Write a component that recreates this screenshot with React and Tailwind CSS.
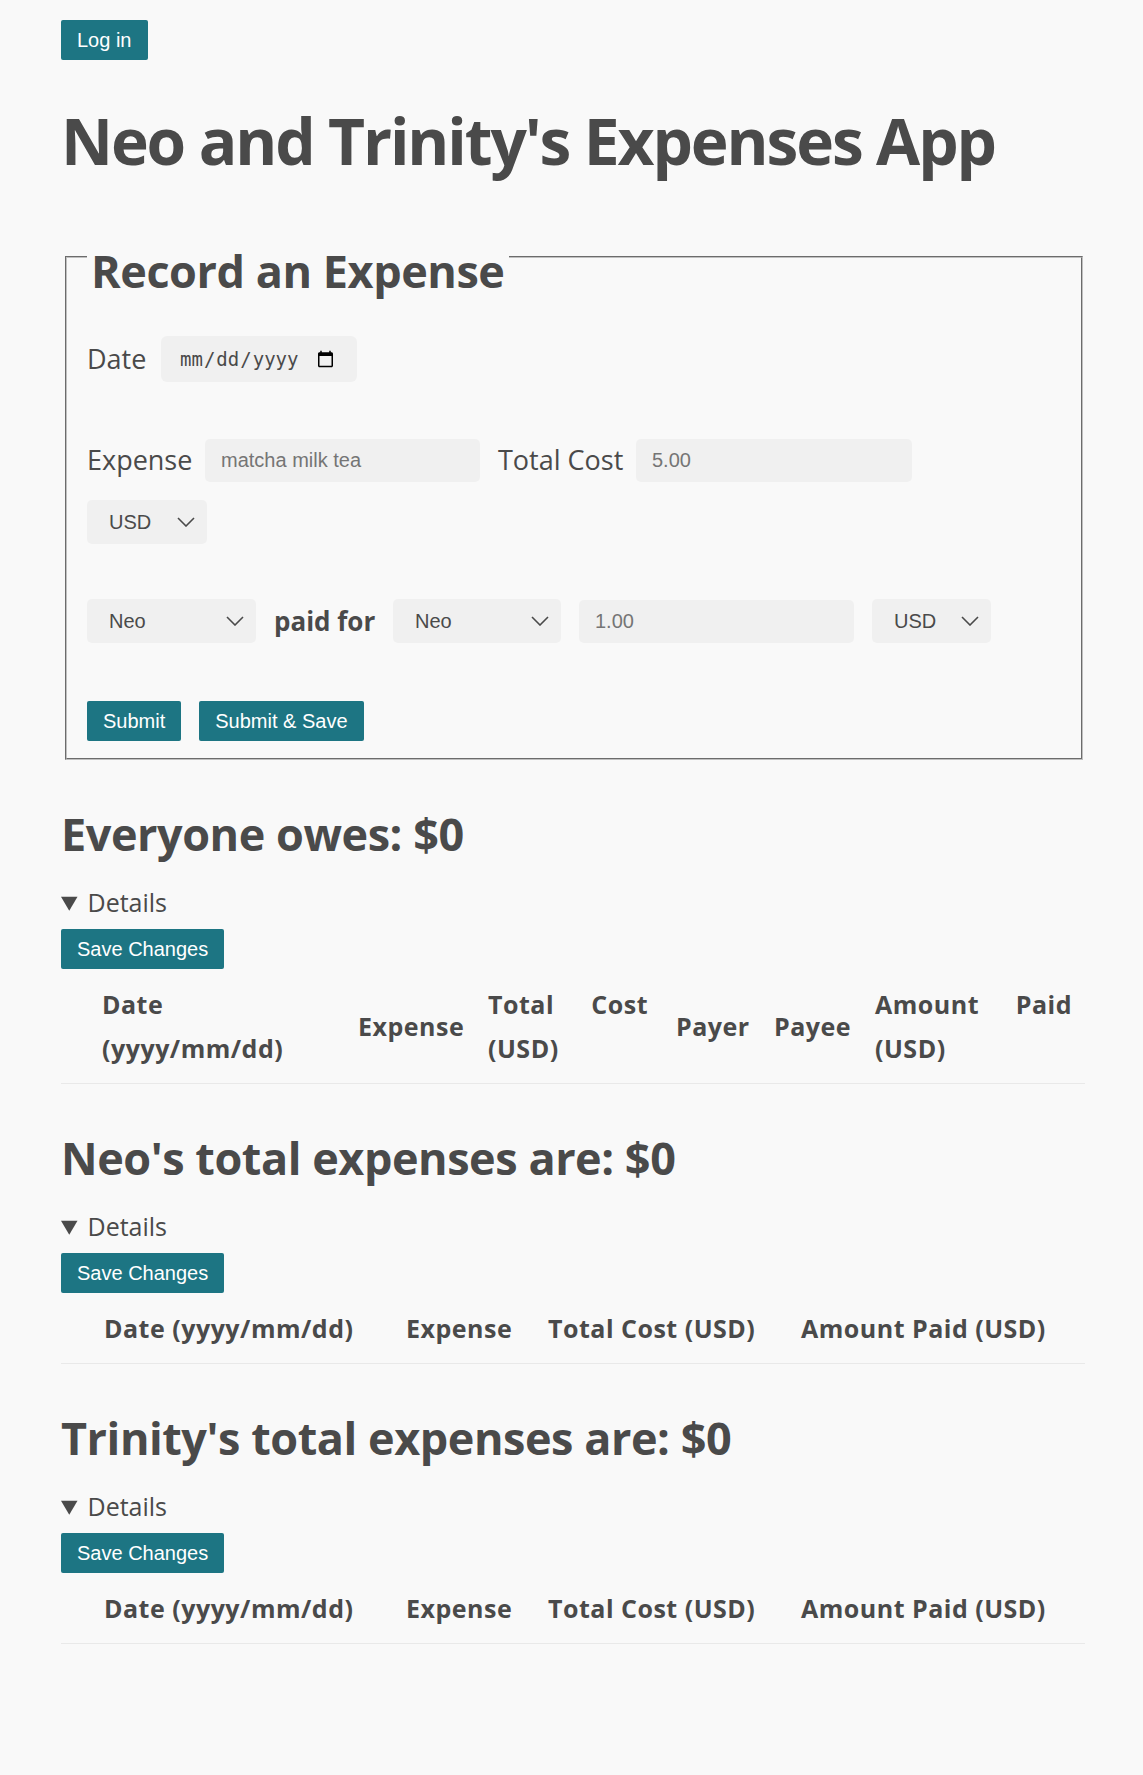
import React from "react";

const sans = "font-['Open_Sans','Noto_Sans',sans-serif]";
const arial = "font-['Liberation_Sans',Arial,sans-serif]";

function Button({ children }) {
  return (
    <button
      type="button"
      className={`h-[40px] rounded-[2px] bg-[#1d7583] px-[16px] text-[20px] leading-none text-white ${arial}`}
    >
      {children}
    </button>
  );
}

function Chevron() {
  return (
    <svg width="18" height="10" viewBox="0 0 18 10" className="pointer-events-none absolute right-[12px] top-1/2 -translate-y-1/2">
      <path d="M1 1l8 8 8-8" fill="none" stroke="#4a4a4a" strokeWidth="1.6" />
    </svg>
  );
}

function Select({ value, options, width }) {
  return (
    <div className={`relative ${width}`}>
      <select
        defaultValue={value}
        className={`h-[44px] w-full appearance-none rounded-[5px] bg-[#f0f0f0] pl-[22px] pr-[36px] text-[20px] text-[#4a4a4a] outline-none ${arial}`}
      >
        {options.map((option) => (
          <option key={option}>{option}</option>
        ))}
      </select>
      <Chevron />
    </div>
  );
}

function TextInput({ placeholder, width }) {
  return (
    <input
      type="text"
      placeholder={placeholder}
      className={`h-[43px] ${width} rounded-[5px] bg-[#f0f0f0] px-[16px] text-[20px] text-[#4a4a4a] outline-none placeholder:text-[#757575] ${arial}`}
    />
  );
}

function Section({ title, children }) {
  return (
    <section className="mt-[51px]">
      <h2 className="text-[45px] font-bold leading-none tracking-[-0.01em]">{title}</h2>
      <details open className="mt-[34px]">
        <summary className="cursor-pointer text-[25px] leading-none">Details</summary>
        <div className="mt-[14px]">
          <Button>Save Changes</Button>
        </div>
        {children}
      </details>
    </section>
  );
}

function Stacked({ first, second, width }) {
  return (
    <div className={width}>
      <div className="flex justify-between">
        <span>{first}</span>
        {second ? <span>{second}</span> : null}
      </div>
      <div>(USD)</div>
    </div>
  );
}

function EveryoneTable() {
  return (
    <table className="w-full table-fixed border-collapse text-[25px] font-bold leading-[44px] tracking-[0.02em]">
      <colgroup>
        <col className="w-[41px]" />
        <col className="w-[256px]" />
        <col className="w-[130px]" />
        <col className="w-[188px]" />
        <col className="w-[98px]" />
        <col className="w-[101px]" />
        <col className="w-[210px]" />
      </colgroup>
      <thead>
        <tr className="border-b border-[#e9e9e9] text-left align-middle">
          <th className="py-[13px]" />
          <th className="py-[13px]">
            <div>Date</div>
            <div>(yyyy/mm/dd)</div>
          </th>
          <th className="py-[13px]">Expense</th>
          <th className="py-[13px]">
            <Stacked first="Total" second="Cost" width="w-[160px]" />
          </th>
          <th className="py-[13px]">Payer</th>
          <th className="py-[13px]">Payee</th>
          <th className="py-[13px]">
            <Stacked first="Amount" second="Paid" width="w-[197px]" />
          </th>
        </tr>
      </thead>
      <tbody />
    </table>
  );
}

function PersonTable() {
  return (
    <table className="w-full table-fixed border-collapse text-[25px] font-bold leading-[44px] tracking-[0.02em]">
      <colgroup>
        <col className="w-[43px]" />
        <col className="w-[302px]" />
        <col className="w-[142px]" />
        <col className="w-[253px]" />
        <col className="w-[284px]" />
      </colgroup>
      <thead>
        <tr className="border-b border-[#e9e9e9] text-left align-middle">
          <th className="py-[13px]" />
          <th className="whitespace-nowrap py-[13px]">Date (yyyy/mm/dd)</th>
          <th className="py-[13px]">Expense</th>
          <th className="whitespace-nowrap py-[13px]">Total Cost (USD)</th>
          <th className="whitespace-nowrap py-[13px]">Amount Paid (USD)</th>
        </tr>
      </thead>
      <tbody />
    </table>
  );
}

export default function App() {
  return (
    <div className={`min-h-screen bg-[#f9f9f9] pb-[130px] pl-[61px] pr-[58px] pt-[20px] text-[#4a4a4a] ${sans}`}>
      <Button>Log in</Button>

      <h1 className="mt-[49px] text-[64px] font-bold leading-none tracking-[-0.033em]">
        Neo and Trinity's Expenses App
      </h1>

      <fieldset className="ml-[4px] mr-[2px] mt-[48px] border-2 border-[#c0c0c0] px-[20px] pb-[17px] [--tw-border-style:groove]">
        <legend className="px-[4px] pt-[27px] text-[45px] font-bold leading-none tracking-[-0.01em]">
          Record an Expense
        </legend>

        <div className="mt-[43px] flex items-center gap-[18px]">
          <label className="w-[56px] text-[27px] font-medium">Date</label>
          <input
            type="date"
            className="h-[46px] w-[196px] rounded-[6px] bg-[#f0f0f0] pl-[18px] pr-[20px] font-['DejaVu_Sans_Mono',monospace] text-[19px] text-[#4a4a4a] outline-none"
          />
        </div>

        <div className="mt-[57px] flex items-center gap-[18px]">
          <label className="w-[100px] text-[27px] font-medium">Expense</label>
          <TextInput placeholder="matcha milk tea" width="w-[275px]" />
          <label className="w-[120px] whitespace-nowrap text-[27px] font-medium">Total Cost</label>
          <TextInput placeholder="5.00" width="w-[276px]" />
        </div>

        <div className="mt-[18px]">
          <Select value="USD" options={["USD", "EUR", "GBP"]} width="w-[120px]" />
        </div>

        <div className="mt-[55px] flex items-center gap-[18px]">
          <Select value="Neo" options={["Neo", "Trinity"]} width="w-[169px]" />
          <span className="w-[101px] whitespace-nowrap text-[26px] font-bold">paid for</span>
          <Select value="Neo" options={["Neo", "Trinity"]} width="w-[168px]" />
          <TextInput placeholder="1.00" width="w-[275px]" />
          <Select value="USD" options={["USD", "EUR", "GBP"]} width="w-[119px]" />
        </div>

        <div className="mt-[58px] flex gap-[18px]">
          <Button>Submit</Button>
          <Button>Submit &amp; Save</Button>
        </div>
      </fieldset>

      <Section title="Everyone owes: $0">
        <EveryoneTable />
      </Section>

      <Section title="Neo's total expenses are: $0">
        <PersonTable />
      </Section>

      <Section title="Trinity's total expenses are: $0">
        <PersonTable />
      </Section>
    </div>
  );
}
